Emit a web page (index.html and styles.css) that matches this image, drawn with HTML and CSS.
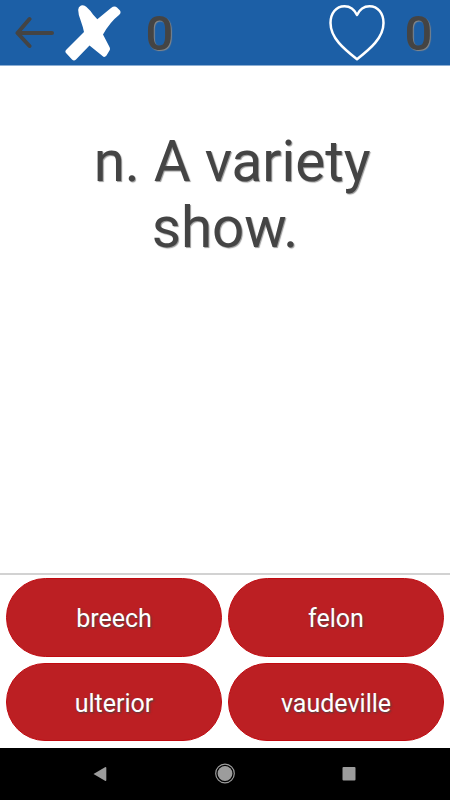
FILE: index.html
```html
<!DOCTYPE html>
<html lang="en">

<head>
    <meta charset="UTF-8">
    <meta name="viewport" content="width=device-width, initial-scale=1.0">
    <title>Vocabulary</title>
    <link rel="stylesheet" href="styles.css">
</head>

<body>
    <header class="topbar">
        <svg class="back" width="40" height="34" viewBox="0 0 40 34">
            <path d="M37 17H2.5M14.5 3L2.5 17L14.5 30" />
        </svg>
        <svg class="cross" width="57" height="58" viewBox="0 0 57 58">
            <path d="M13.2 6Q13 3 16 1.6Q19 0.6 21.5 3Q26 7 28 10.5L32.3 15.3L46 4Q49.5 1.5 52 3.5L55 6.5Q56.5 9 54 11Q45 18 38 30.5L44.5 43Q45.5 45 44.5 46.5L41.5 51.5Q39.5 54 37.5 52L24.5 41.5L11 55.5Q9 57.5 7 55.5L1 49Q-0.5 47 1.5 45.5L19 28Q18 23 15.5 16Q13.2 10 13.2 6Z" />
        </svg>
        <span class="score">0</span>
        <svg class="heart" width="58" height="58" viewBox="0 0 58 58">
            <path d="M29 11C26 4.5 21.5 2.2 16.5 2.2C8 2.2 2.5 9.5 2.5 19C2.5 34 16 45 29 55.3C42 45 55.5 34 55.5 19C55.5 9.5 50 2.2 41.5 2.2C36.5 2.2 32 4.5 29 11Z" />
        </svg>
        <span class="score">0</span>
    </header>

    <main class="question">
        <h1> n. A variety
show.</h1>
    </main>

    <div class="answers">
        <button>breech</button>
        <button>felon</button>
        <button>ulterior</button>
        <button>vaudeville</button>
    </div>

    <nav class="navbar">
        <svg width="14" height="16" viewBox="0 0 14 16">
            <path d="M0.5 8L12 1.2Q13.3 0.5 13.3 2V14Q13.3 15.5 12 14.8Z" />
        </svg>
        <svg width="20" height="22" viewBox="0 0 20 22">
            <circle class="ring" cx="10" cy="10.5" r="9.3" />
            <circle cx="10" cy="10.5" r="7.4" />
        </svg>
        <svg width="14" height="14" viewBox="0 0 14 14">
            <rect x="0.5" y="0" width="13" height="13.6" rx="1" />
        </svg>
    </nav>
</body>

</html>
```

FILE: styles.css
```css
* {
    box-sizing: border-box;
}
body {
    margin: 0;
    height: 800px;
    display: flex;
    flex-direction: column;
    background-color: white;
    font-family: Roboto, sans-serif;
    overflow: hidden;
}
svg {
    display: block;
    flex: none;
}
.topbar {
    height: 66px;
    padding-left: 15px;
    display: flex;
    align-items: center;
    background-color: #1c5fa6;
    border-bottom: 1px solid #8caed3;
}
.back path {
    fill: none;
    stroke: #444;
    stroke-width: 4;
    stroke-linecap: round;
    stroke-linejoin: round;
}
.cross {
    margin: 0 23px 0 10px;
}
.cross path {
    fill: white;
}
.score {
    width: 29px;
    padding-top: 2px;
    text-align: center;
    font-size: 49px;
    font-weight: 500;
    line-height: 66px;
    color: #444;
    text-shadow: 1px 1px 1px #888;
}
.heart {
    margin: 0 18px 0 154px;
}
.heart path {
    fill: none;
    stroke: white;
    stroke-width: 2.5;
    stroke-linejoin: round;
}
.question {
    flex: 1;
    padding-top: 63px;
    border-bottom: 2px solid #d2d2d2;
}
.question h1 {
    margin: 0;
    font-size: 56.5px;
    font-weight: 400;
    line-height: 66px;
    text-align: center;
    white-space: pre;
    color: #444;
    text-shadow: 1px 1px 1px #999;
}
.answers {
    height: 173px;
    padding: 3px 6px 7px;
    display: grid;
    grid-template-columns: 1fr 1fr;
    gap: 6px;
}
.answers button {
    padding: 3px 0 0;
    border: 1px solid #c00a10;
    border-radius: 40px;
    background-color: #bc1f23;
    color: white;
    font-family: inherit;
    font-size: 25px;
    text-shadow: 1px 1px 2px #444;
}
.navbar {
    height: 52px;
    padding: 0 94px 0 93px;
    display: flex;
    justify-content: space-between;
    align-items: center;
    background-color: black;
}
.navbar svg {
    fill: #9c9c9c;
}
.navbar .ring {
    fill: none;
    stroke: #9c9c9c;
    stroke-width: 1.2;
}
```
